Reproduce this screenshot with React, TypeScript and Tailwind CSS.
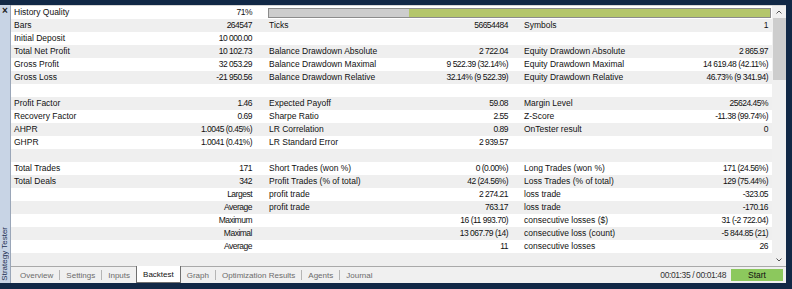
import React from 'react';

type Row = [string, string, string, string, string, string];

// label / value pairs for the three report columns
const rows: Row[] = [
  ['History Quality', '71%', '', '', '', ''],
  ['Bars', '264547', 'Ticks', '56654484', 'Symbols', '1'],
  ['Initial Deposit', '10 000.00', '', '', '', ''],
  ['Total Net Profit', '10 102.73', 'Balance Drawdown Absolute', '2 722.04', 'Equity Drawdown Absolute', '2 865.97'],
  ['Gross Profit', '32 053.29', 'Balance Drawdown Maximal', '9 522.39 (32.14%)', 'Equity Drawdown Maximal', '14 619.48 (42.11%)'],
  ['Gross Loss', '-21 950.56', 'Balance Drawdown Relative', '32.14% (9 522.39)', 'Equity Drawdown Relative', '46.73% (9 341.94)'],
  ['', '', '', '', '', ''],
  ['Profit Factor', '1.46', 'Expected Payoff', '59.08', 'Margin Level', '25624.45%'],
  ['Recovery Factor', '0.69', 'Sharpe Ratio', '2.55', 'Z-Score', '-11.38 (99.74%)'],
  ['AHPR', '1.0045 (0.45%)', 'LR Correlation', '0.89', 'OnTester result', '0'],
  ['GHPR', '1.0041 (0.41%)', 'LR Standard Error', '2 939.57', '', ''],
  ['', '', '', '', '', ''],
  ['Total Trades', '171', 'Short Trades (won %)', '0 (0.00%)', 'Long Trades (won %)', '171 (24.56%)'],
  ['Total Deals', '342', 'Profit Trades (% of total)', '42 (24.56%)', 'Loss Trades (% of total)', '129 (75.44%)'],
  ['', 'Largest', 'profit trade', '2 274.21', 'loss trade', '-323.05'],
  ['', 'Average', 'profit trade', '763.17', 'loss trade', '-170.16'],
  ['', 'Maximum', '', '16 (11 993.70)', 'consecutive losses ($)', '31 (-2 722.04)'],
  ['', 'Maximal', '', '13 067.79 (14)', 'consecutive loss (count)', '-5 844.85 (21)'],
  ['', 'Average', '', '11', 'consecutive losses', '26'],
  ['', '', '', '', '', ''],
];

const Cell: React.FC<{ label: string; value: string; pr: string }> = ({ label, value, pr }) => (
  <div className={`flex items-center justify-between pl-[3px] ${pr}`}>
    <span className="whitespace-nowrap">{label}</span>
    <span className="whitespace-nowrap tracking-[-0.5px]">{value}</span>
  </div>
);

const tabs = ['Overview', 'Settings', 'Inputs', 'Backtest', 'Graph', 'Optimization Results', 'Agents', 'Journal'];

const App: React.FC = () => {
  return (
    <div
      className="w-[792px] h-[289px] bg-[#112846] pt-[5px] text-[8.5px] leading-[13px] text-[#111]"
      style={{ fontFamily: '"Liberation Sans", Arial, sans-serif' }}
    >
      <div className="flex w-[786px] h-[278px] bg-[#f0f0f0]">
        {/* side strip */}
        <div className="w-[11px] flex flex-col justify-between items-center bg-[#c8d4e5] border-r border-[#9aa6b8]">
          <span className="mt-[1px] text-[10px] leading-[10px] font-bold text-[#222]">×</span>
          <span className="mb-[2px] [writing-mode:vertical-rl] rotate-180 whitespace-nowrap text-[8px] leading-[10px] text-[#1d2f52]">
            Strategy Tester
          </span>
        </div>

        <div className="flex-1 flex flex-col border-t border-[#d6d6d6]">
          <div className="flex h-[260px]">
            {/* report table */}
            <div className="flex-1 flex flex-col">
              {rows.map((r, i) => (
                <div
                  key={i}
                  className={`grid grid-cols-[255px_255px_1fr] h-[13px] ${i % 2 === 0 ? 'bg-white' : 'bg-[#efefef]'}`}
                >
                  <Cell label={r[0]} value={r[1]} pr="pr-[14px]" />
                  {i === 0 ? (
                    <div className="col-span-2 flex items-center pl-[2px] pr-[1px]">
                      <div className="flex w-full h-[10px] border border-[#8c8c8c]">
                        <div className="w-[28%] bg-[#cdcdcd]" />
                        <div className="flex-1 bg-[#b4c66b]" />
                      </div>
                    </div>
                  ) : (
                    <>
                      <Cell label={r[2]} value={r[3]} pr="pr-[13px]" />
                      <Cell label={r[4]} value={r[5]} pr="pr-[4px]" />
                    </>
                  )}
                </div>
              ))}
            </div>

            {/* scrollbar */}
            <div className="w-[14px] flex flex-col items-center bg-[#f0f0f0]">
              <svg width="8" height="12" viewBox="0 0 8 12" className="shrink-0">
                <path d="M1.5 7.5 L4 5 L6.5 7.5" fill="none" stroke="#555" strokeWidth="1" />
              </svg>
              <div className="w-[13px] h-[62px] bg-[#cdcdcd]" />
              <div className="flex-1" />
              <svg width="8" height="12" viewBox="0 0 8 12" className="shrink-0">
                <path d="M1.5 4.5 L4 7 L6.5 4.5" fill="none" stroke="#555" strokeWidth="1" />
              </svg>
            </div>
          </div>

          {/* tab bar */}
          <div className="flex items-stretch h-[17px] border-t border-[#a9a9a9] pl-[3px] text-[8px] text-[#6b6b6b]">
            {tabs.map((t, i) => {
              const active = t === 'Backtest';
              const prevActive = tabs[i - 1] === 'Backtest';
              return (
                <React.Fragment key={t}>
                  {i > 0 && !active && !prevActive && (
                    <div className="self-center w-px h-[10px] bg-[#b5b5b5]" />
                  )}
                  <div
                    className={`flex items-center px-[6px] ${
                      active ? 'bg-white border-x border-b border-[#6f6f6f] text-[#111] -mt-px' : ''
                    }`}
                  >
                    {t}
                  </div>
                </React.Fragment>
              );
            })}
            <div className="flex-1" />
            <div className="flex items-center pr-[5px] text-[8.5px] text-[#333] tracking-[-0.4px]">00:01:35 / 00:01:48</div>
            <div className="self-center flex items-center justify-center w-[52px] h-[12px] bg-[#8cc85d] text-[8.5px] text-[#111] mr-[3px]">
              Start
            </div>
          </div>
        </div>
      </div>
    </div>
  );
};

export default App;
